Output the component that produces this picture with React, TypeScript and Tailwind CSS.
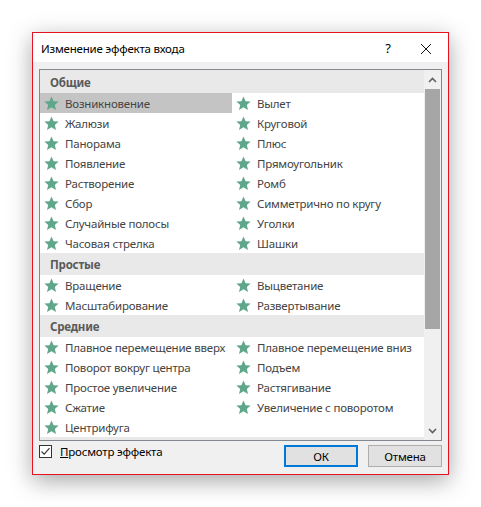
import React from "react";

type Group = { title: string; items: string[] };

const groups: Group[] = [
  {
    title: "Общие",
    items: [
      "Возникновение",
      "Вылет",
      "Жалюзи",
      "Круговой",
      "Панорама",
      "Плюс",
      "Появление",
      "Прямоугольник",
      "Растворение",
      "Ромб",
      "Сбор",
      "Симметрично по кругу",
      "Случайные полосы",
      "Уголки",
      "Часовая стрелка",
      "Шашки",
    ],
  },
  {
    title: "Простые",
    items: ["Вращение", "Выцветание", "Масштабирование", "Развертывание"],
  },
  {
    title: "Средние",
    items: [
      "Плавное перемещение вверх",
      "Плавное перемещение вниз",
      "Поворот вокруг центра",
      "Подъем",
      "Простое увеличение",
      "Растягивание",
      "Сжатие",
      "Увеличение с поворотом",
      "Центрифуга",
    ],
  },
];

function Star() {
  return (
    <svg width="15" height="15" viewBox="0 0 24 24" className="shrink-0">
      <path
        d="M12 0.8l3.3 7.4 8.1.7-6.1 5.4 1.9 7.9L12 18.1l-7.2 4.1 1.9-7.9L0.6 8.9l8.1-.7z"
        fill="#5fa68a"
      />
    </svg>
  );
}

export default function App() {
  return (
    <div
      className="w-[481px] h-[507px] bg-white pl-[32px] pt-[32px] tracking-[-0.2px]"
      style={{ fontFamily: '"Noto Sans", "Liberation Sans", sans-serif' }}
    >
      <div className="w-[417px] h-[443px] border border-[#e81123] flex flex-col shadow-[0_6px_22px_rgba(0,0,0,0.35)]">
        {/* Title bar */}
        <div className="h-[29px] bg-white flex items-center pl-[8px] pt-[2px] text-[11.5px] text-black">
          <span className="flex-1">Изменение эффекта входа</span>
          <span className="w-[20px] text-center text-[13px] mr-[22px]">?</span>
          <svg width="12" height="12" viewBox="0 0 12 12" className="mr-[16px]">
            <path d="M1 1L11 11M11 1L1 11" stroke="#111" strokeWidth="1" />
          </svg>
        </div>

        {/* Body */}
        <div className="flex-1 bg-[#f0f0f0] px-[6px] pt-[7px] flex flex-col">
          <div className="w-[403px] h-[372px] border border-[#828790] bg-white flex overflow-hidden">
            <div className="w-[384px] h-full overflow-hidden bg-[#e9e9e9]">
              <div className="h-[1px]" />
              {groups.map((g, gi) => (
                <div key={gi}>
                  <div className="h-[22px] bg-[#e9e9e9] flex items-center pl-[10px] pt-[2px] text-[11.5px] font-bold text-[#5a5a5a]">
                    {g.title}
                  </div>
                  <div className="grid grid-cols-2 bg-white">
                    {g.items.map((it, i) => (
                      <div
                        key={i}
                        className={`h-[20px] flex items-center gap-[6px] pl-[4px] text-[11.5px] text-[#444] whitespace-nowrap ${
                          gi === 0 && i === 0 ? "bg-[#c4c4c4]" : ""
                        }`}
                      >
                        <Star />
                        <span className="pt-[2px]">{it}</span>
                      </div>
                    ))}
                  </div>
                </div>
              ))}
            </div>
            {/* Scrollbar */}
            <div className="w-[17px] h-full bg-[#f0f0f0] flex flex-col items-center">
              <div className="h-[19px] w-full flex items-center justify-center">
                <svg width="9" height="6" viewBox="0 0 9 6">
                  <path d="M1 5L4.5 1.5L8 5" stroke="#606060" strokeWidth="1.6" fill="none" />
                </svg>
              </div>
              <div className="w-[15px] h-[240px] bg-[#a6a6a6]" />
              <div className="flex-1" />
              <div className="h-[19px] w-full flex items-center justify-center">
                <svg width="9" height="6" viewBox="0 0 9 6">
                  <path d="M1 1L4.5 4.5L8 1" stroke="#606060" strokeWidth="1.6" fill="none" />
                </svg>
              </div>
            </div>
          </div>

          {/* Bottom row */}
          <div className="flex mt-[4px]">
            <div className="flex items-start gap-[8px] flex-1">
              <div className="w-[13px] h-[13px] border border-[#333] bg-white flex items-center justify-center">
                <svg width="11" height="11" viewBox="0 0 11 11">
                  <path d="M1.5 5.5L4.2 8.2L9.5 2.2" stroke="#333" strokeWidth="1.1" fill="none" />
                </svg>
              </div>
              <span className="text-[11.5px] text-black leading-[14px]">
                <span className="underline">П</span>росмотр эффекта
              </span>
            </div>
            <button className="w-[74px] h-[22px] border-2 border-[#0078d7] bg-[#e1e1e1] text-[11.5px] text-black mr-[10px] pt-[1px]">
              ОК
            </button>
            <button className="w-[74px] h-[22px] border border-[#adadad] bg-[#e1e1e1] text-[11.5px] text-black pt-[1px]">
              Отмена
            </button>
          </div>
        </div>
      </div>
    </div>
  );
}
